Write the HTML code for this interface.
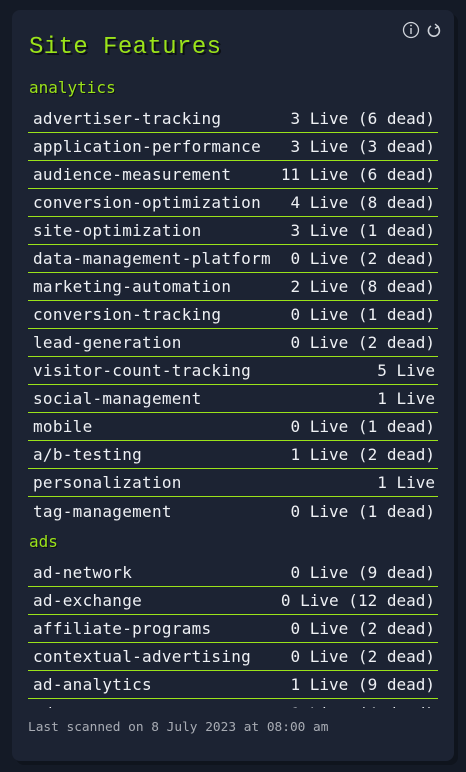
<!DOCTYPE html>
<html><head><meta charset="utf-8"><style>
*{margin:0;padding:0;box-sizing:border-box}
body{width:466px;height:772px;background:#141a26;overflow:hidden;font-family:"DejaVu Sans Mono",monospace}
.card{position:absolute;left:12px;top:10px;width:442px;height:751px;background:#1c2333;border-radius:8px;box-shadow:4px 4px 0 #0f141d}
h1{position:absolute;left:17px;top:24px;font-family:"Liberation Mono",monospace;font-weight:normal;font-size:24px;color:#9be31a;text-shadow:2px 2px 0 #0c0f16;letter-spacing:0.4px}
.icons{position:absolute;right:10px;top:10px;color:#cfd3da;font-size:17px}
.scroll{position:absolute;left:16px;top:61px;width:410px;height:637px;overflow:hidden}
.h{height:34px;line-height:34px;color:#9be31a;font-size:16px;text-shadow:1px 1px 0 #0c0f16;padding-left:1px}
.r{height:28px;display:flex;justify-content:space-between;align-items:center;padding:0 3px 0 5px;color:#eef0f4;font-size:16px;border-bottom:1.5px solid #9be31a}
.r span:first-child{letter-spacing:0.28px}
.r:last-child{border-bottom:none}
.foot{position:absolute;left:16px;top:710px;color:#a8acb4;font-size:12.8px}
</style></head><body>
<div class="card">
<div class="icons"><svg width="42" height="20" viewBox="0 0 42 20"><circle cx="9" cy="10" r="7.5" fill="none" stroke="#cfd3da" stroke-width="1.3"/><line x1="9" y1="8" x2="9" y2="14" stroke="#cfd3da" stroke-width="1.4"/><circle cx="9" cy="5.5" r="0.9" fill="#cfd3da"/><path d="M29 6 A5.5 5.5 0 1 0 35.5 6.5" fill="none" stroke="#cfd3da" stroke-width="1.6"/><path d="M33 4 L36 6.5 L33 8.5" fill="none" stroke="#cfd3da" stroke-width="1.4"/></svg></div>
<h1>Site Features</h1>
<div class="scroll">
<div class="h">analytics</div>
<div class="sec">
<div class="r"><span>advertiser-tracking</span><span>3 Live (6 dead)</span></div>
<div class="r"><span>application-performance</span><span>3 Live (3 dead)</span></div>
<div class="r"><span>audience-measurement</span><span>11 Live (6 dead)</span></div>
<div class="r"><span>conversion-optimization</span><span>4 Live (8 dead)</span></div>
<div class="r"><span>site-optimization</span><span>3 Live (1 dead)</span></div>
<div class="r"><span>data-management-platform</span><span>0 Live (2 dead)</span></div>
<div class="r"><span>marketing-automation</span><span>2 Live (8 dead)</span></div>
<div class="r"><span>conversion-tracking</span><span>0 Live (1 dead)</span></div>
<div class="r"><span>lead-generation</span><span>0 Live (2 dead)</span></div>
<div class="r"><span>visitor-count-tracking</span><span>5 Live</span></div>
<div class="r"><span>social-management</span><span>1 Live</span></div>
<div class="r"><span>mobile</span><span>0 Live (1 dead)</span></div>
<div class="r"><span>a/b-testing</span><span>1 Live (2 dead)</span></div>
<div class="r"><span>personalization</span><span>1 Live</span></div>
<div class="r"><span>tag-management</span><span>0 Live (1 dead)</span></div>
</div>
<div class="h">ads</div>
<div class="sec">
<div class="r"><span>ad-network</span><span>0 Live (9 dead)</span></div>
<div class="r"><span>ad-exchange</span><span>0 Live (12 dead)</span></div>
<div class="r"><span>affiliate-programs</span><span>0 Live (2 dead)</span></div>
<div class="r"><span>contextual-advertising</span><span>0 Live (2 dead)</span></div>
<div class="r"><span>ad-analytics</span><span>1 Live (9 dead)</span></div>
<div class="r"><span>ad-server</span><span>1 Live (4 dead)</span></div>
</div>
</div>
<div class="foot">Last scanned on 8 July 2023 at 08:00 am</div>
</div>
</body></html>
